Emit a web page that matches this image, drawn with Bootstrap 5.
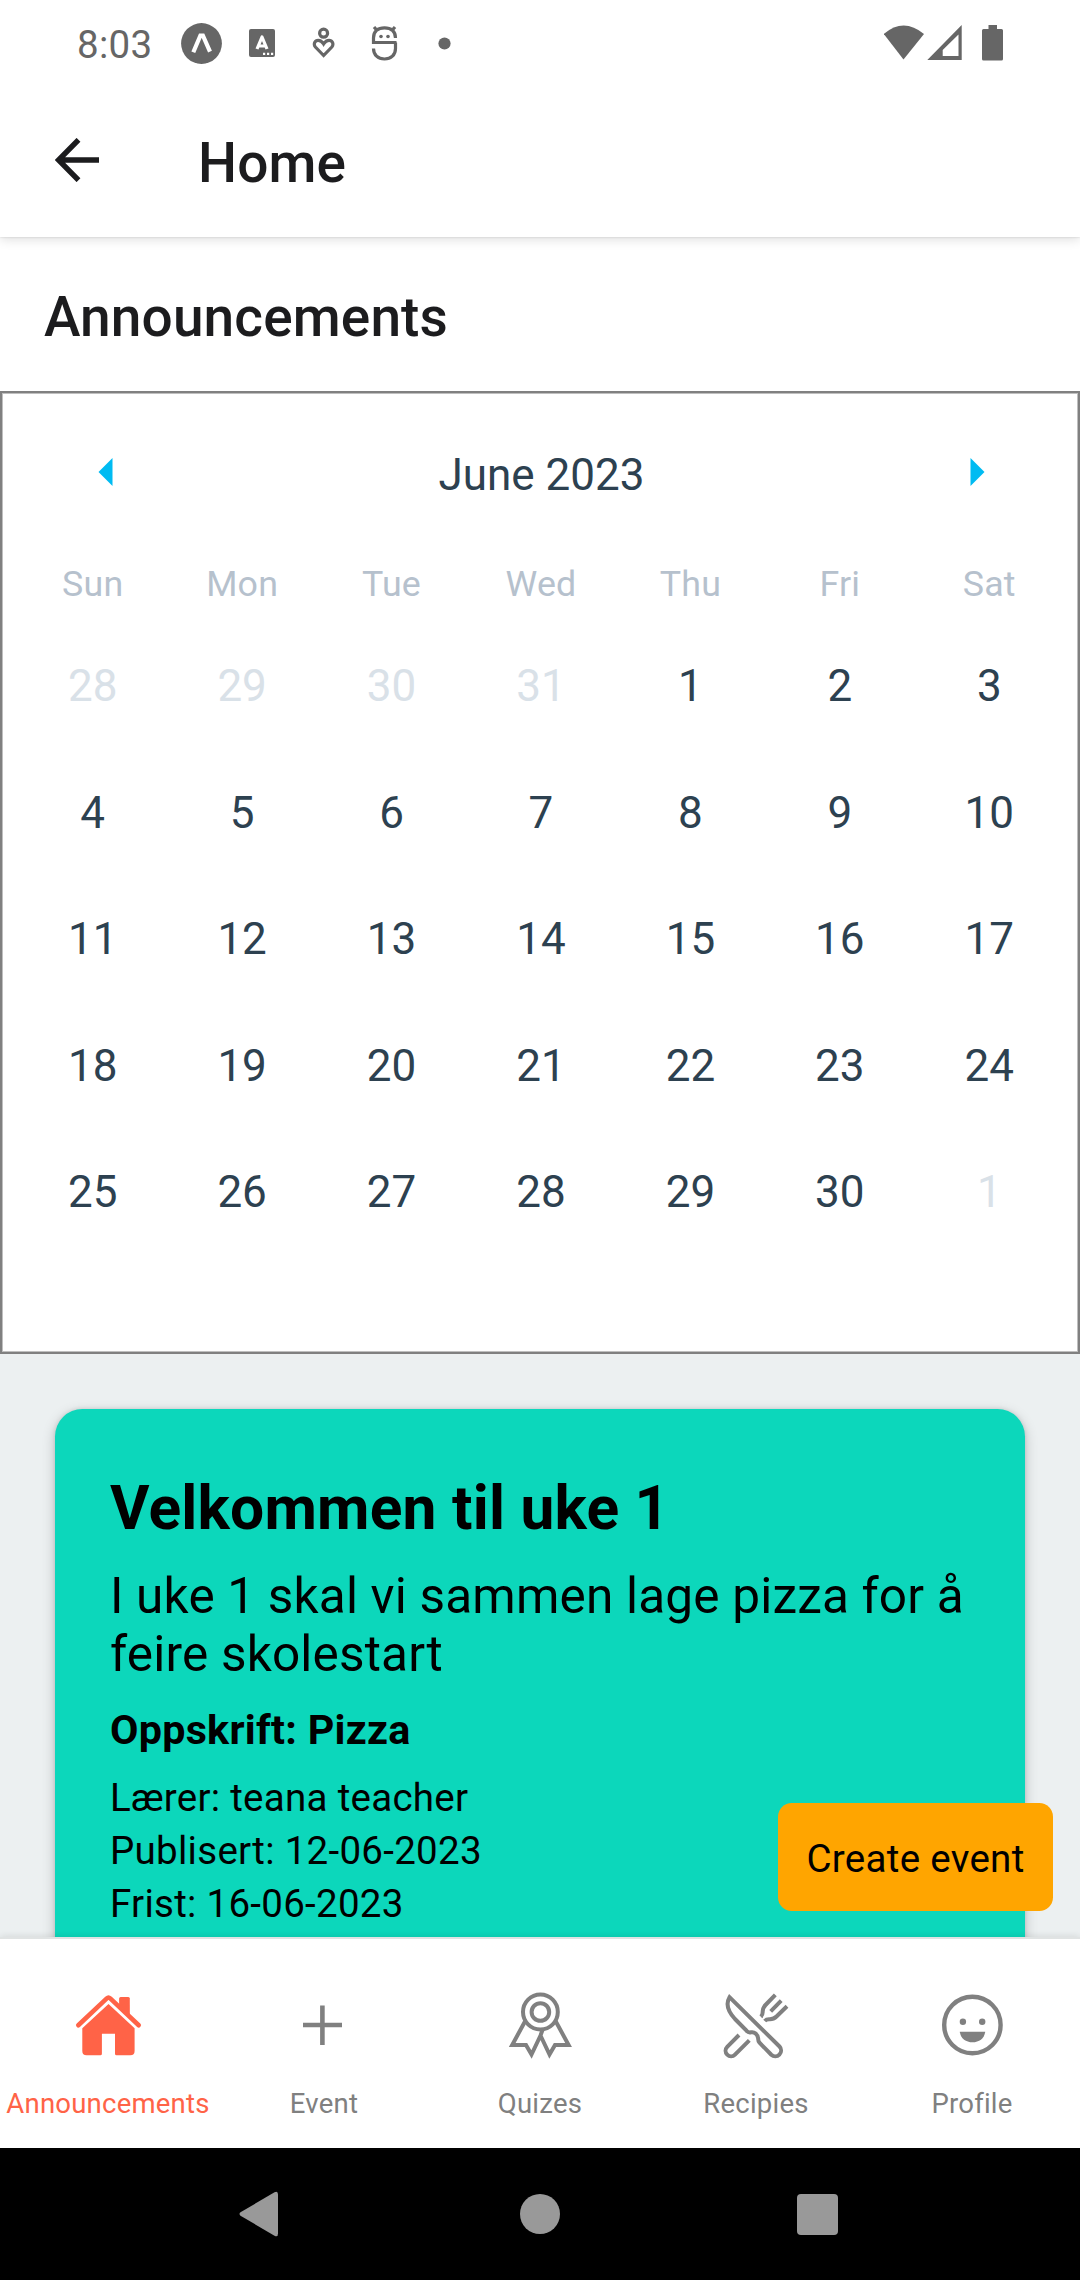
<!DOCTYPE html>
<html lang="no">
<head>
<meta charset="utf-8">
<meta name="viewport" content="width=device-width, initial-scale=1">
<title>Home</title>
<link href="https://cdn.jsdelivr.net/npm/bootstrap@5.3.0/dist/css/bootstrap.min.css" rel="stylesheet">
<style>
  body { width: 1080px; height: 2280px; overflow: hidden; font-family: Roboto, "Noto Sans", sans-serif; color: #000; background: #fff; }
  svg { display: block; flex: none; }
  .status-bar { height: 86px; padding: 0 76px; color: #666; background: #fff; font-size: 38.5px; line-height: 46px; letter-spacing: .3px; z-index: 3; }
  .status-time { width: 76px; padding: 3px 0 0 1px; }
  .app-bar { height: 151px; padding: 3px 0 0 55px; background: #fff; box-shadow: 0 2px 11px rgba(0,0,0,.14), 0 0 2px rgba(0,0,0,.16); z-index: 2; }
  .app-bar svg { margin: -7px 99px 0 0; }
  .screen-title { font-size: 55px; line-height: 64px; font-weight: 500; color: #1c1c1e; letter-spacing: .12px; }
  .section-head { height: 154px; padding: 6px 0 0 44px; }
  .calendar { height: 963px; border: 2px solid #808080; box-shadow: inset 0 0 0 1px #bfbfbf; padding: 0 14px 0 15px; color: #2d4150; font-size: 44px; line-height: 52px; }
  .month-row { height: 164px; padding: 0 79px 0 81px; }
  .month-row svg { margin-top: -6px; }
  .week-names { height: 54px; margin-bottom: 12px; font-size: 35.75px; letter-spacing: .2px; color: #b6c1cd; }
  .week-row { height: 126.5px; }
  .week-names, .week-row { padding-left: 1px; }
  .other-month { color: #d9e1e8; }
  .feed { height: 583px; background: #ecf0f1; padding: 55px 55px 0; }
  .event-card { height: 700px; border: 0; border-radius: 27.5px; background: #0cd7bb; color: #000; padding: 64px 50px 0 55px; box-shadow: 0 4px 14px rgba(0,0,0,.2), 0 0 4px rgba(0,0,0,.12); }
  .event-title { font-size: 60.5px; line-height: 71px; font-weight: 700; margin: 0 0 23px; letter-spacing: .22px; }
  .event-text { font-size: 49.5px; line-height: 58px; margin: 0 0 23px; letter-spacing: .19px; }
  .event-recipe { font-size: 41.25px; line-height: 48px; font-weight: 700; margin: 0 0 17px; letter-spacing: .27px; }
  .event-meta { font-size: 38.5px; line-height: 53px; letter-spacing: .28px; }
  .create-btn { right: 27px; bottom: 26px; width: 275px; height: 108px; padding: 4px 0 0; border: 0; border-radius: 13.75px; background: orange; color: #000; font-size: 38.5px; line-height: 46px; letter-spacing: .3px; }
  .tab-bar { height: 211px; background: #fff; border-top: 2px solid #e0e3e3; box-shadow: 0 -1px 7px rgba(0,0,0,.1); z-index: 2; }
  .tab-item { width: 216px; padding-top: 46px; color: #808080; font-size: 27.5px; line-height: 32px; letter-spacing: .22px; text-decoration: none; white-space: nowrap; }
  .tab-item svg { margin-bottom: 23px; }
  .tab-item.current { color: tomato; }
  .system-nav { height: 132px; background: #000; }
</style>
</head>
<body class="d-flex flex-column">

<header class="status-bar position-relative d-flex align-items-center flex-shrink-0">
  <span class="status-time">8:03</span>
  <svg style="margin-left:29px" width="41" height="41" viewBox="0 0 41 41"><circle cx="20.5" cy="20.5" r="20.4" fill="#666"/><path d="M12.300 29.300 19.400 12.500H21.900L29 28.700" fill="none" stroke="#fff" stroke-width="4.200"/></svg>
  <svg style="margin-left:27px" width="26" height="28" viewBox="0 0 26 28"><rect width="26" height="28" rx="2" fill="#666"/><path d="M8 20 13 8 18 20M9.5 17H16.500" fill="none" stroke="#fff" stroke-width="3.2" stroke-linejoin="round"/><path d="M14 24.800h2.200M18 24.800h2.200M22 24.800h2.200" stroke="#fff" stroke-width="2.200"/></svg>
  <svg style="margin-left:37px" width="23" height="32" viewBox="0 0 23 32"><g fill="none" stroke="#666" stroke-width="3.200"><circle cx="11.600" cy="6.200" r="4"/><path d="M11.600 28.500 3.400 20C1 17 3 13.300 6.200 13.300 8.500 13.300 10 14.500 11.600 17 13.200 14.500 14.700 13.300 17 13.300 20.200 13.300 22.200 17 19.800 20Z"/></g></svg>
  <svg style="margin-left:36px" width="27" height="36" viewBox="0 0 27 36"><g fill="none" stroke="#666" stroke-width="3.200"><path d="M25.500 17.500H2.500V13C2.500 6 7 2.800 13.500 2.800S24.500 6 24.500 13M2.500 23.500C2.500 30 7 34 13.500 34S24.500 30 24.500 23.500V17.500M3 2 6.500 6M24 2 20.500 6"/></g><circle cx="10" cy="11.500" r="1.800" fill="#666"/><circle cx="17" cy="11.500" r="1.800" fill="#666"/></svg>
  <svg style="margin-left:40px" width="13" height="13" viewBox="0 0 13 13"><circle cx="6.500" cy="6.500" r="6.100" fill="#666"/></svg>
  <svg class="ms-auto" width="120" height="36" viewBox="884 25 120 36" fill="#666"><path d="M883.800 34Q903.500 17 924 34L903.500 59.500Z"/><path fill-rule="evenodd" d="M927.300 60 961.700 25V60ZM942.700 56H958.500V34.500L942.700 50Z"/><path d="M988.500 25H997V29H1001.500Q1003 29 1003 30.500V59Q1003 60.600 1001.500 60.600H983.500Q982 60.600 982 59V30.500Q982 29 983.500 29H988.500Z"/></svg>
</header>

<nav class="app-bar d-flex align-items-center position-relative flex-shrink-0">
  <svg width="44" height="44" viewBox="0 0 44 44" fill="none" stroke="#1c1c1e" stroke-width="5.400"><path d="M44 22H4M23.500 1.800 3.500 22 23.500 42.200"/></svg>
  <h1 class="screen-title mb-0">Home</h1>
</nav>

<div class="section-head d-flex align-items-center flex-shrink-0">
  <h2 class="screen-title mb-0">Announcements</h2>
</div>

<section class="calendar flex-shrink-0">
  <div class="month-row d-flex align-items-center justify-content-between">
    <svg width="15" height="28" viewBox="0 0 15 28"><path d="M14.500 0V28L.5 14Z" fill="#00bbf2"/></svg>
    <span>June 2023</span>
    <svg width="15" height="28" viewBox="0 0 15 28"><path d="M.5 0V28L14.500 14Z" fill="#00bbf2"/></svg>
  </div>
  <div class="week-names row g-0 align-items-center text-center">
    <div class="col">Sun</div><div class="col">Mon</div><div class="col">Tue</div><div class="col">Wed</div><div class="col">Thu</div><div class="col">Fri</div><div class="col">Sat</div>
  </div>
  <div class="week-row row g-0 align-items-center text-center">
    <div class="col other-month">28</div><div class="col other-month">29</div><div class="col other-month">30</div><div class="col other-month">31</div><div class="col">1</div><div class="col">2</div><div class="col">3</div>
  </div>
  <div class="week-row row g-0 align-items-center text-center">
    <div class="col">4</div><div class="col">5</div><div class="col">6</div><div class="col">7</div><div class="col">8</div><div class="col">9</div><div class="col">10</div>
  </div>
  <div class="week-row row g-0 align-items-center text-center">
    <div class="col">11</div><div class="col">12</div><div class="col">13</div><div class="col">14</div><div class="col">15</div><div class="col">16</div><div class="col">17</div>
  </div>
  <div class="week-row row g-0 align-items-center text-center">
    <div class="col">18</div><div class="col">19</div><div class="col">20</div><div class="col">21</div><div class="col">22</div><div class="col">23</div><div class="col">24</div>
  </div>
  <div class="week-row row g-0 align-items-center text-center">
    <div class="col">25</div><div class="col">26</div><div class="col">27</div><div class="col">28</div><div class="col">29</div><div class="col">30</div><div class="col other-month">1</div>
  </div>
</section>

<main class="feed position-relative overflow-hidden flex-shrink-0">
  <article class="card event-card">
    <h3 class="event-title">Velkommen til uke 1</h3>
    <p class="event-text">I uke 1 skal vi sammen lage pizza for å feire skolestart</p>
    <p class="event-recipe">Oppskrift: Pizza</p>
    <div class="event-meta">Lærer: teana teacher</div>
    <div class="event-meta">Publisert: 12-06-2023</div>
    <div class="event-meta">Frist: 16-06-2023</div>
  </article>
  <button type="button" class="btn create-btn position-absolute">Create event</button>
</main>

<nav class="tab-bar d-flex position-relative flex-shrink-0">
  <a href="#" class="tab-item current d-flex flex-column align-items-center">
    <svg width="80" height="80" viewBox="0 0 80 80" fill="tomato"><path d="M51.100 20V13.500Q51.100 12 52.600 12H60.300Q61.800 12 61.800 13.500V31Z"/><path d="M10.300 40.200 38.800 13.400Q40.500 11.800 42.200 13.400L70.700 40.200" fill="none" stroke="tomato" stroke-width="4.600" stroke-linecap="round"/><path d="M40.500 19 66.600 43.300V66Q66.600 70.300 62.300 70.300H48.500Q47 70.300 47 68.800V48.700H33.900V68.800Q33.900 70.300 32.400 70.300H18.600Q14.300 70.300 14.300 66V43.300Z"/></svg>
    <span>Announcements</span>
  </a>
  <a href="#" class="tab-item d-flex flex-column align-items-center">
    <svg width="80" height="80" viewBox="0 0 80 80"><path d="M19 40H58M38.400 20.600V60" stroke="gray" stroke-width="4.600"/></svg>
    <span>Event</span>
  </a>
  <a href="#" class="tab-item d-flex flex-column align-items-center">
    <svg width="80" height="80" viewBox="0 0 80 80" fill="none" stroke="gray" stroke-width="4"><circle cx="40.400" cy="27" r="17.400"/><circle cx="40.400" cy="27" r="8.800"/><path d="M25.500 35.500 12.200 60H26L31.500 69.500 40.500 50.500 42.500 45M55.300 35.500 68.600 60H55L49.500 69.500 40.500 50.500"/></svg>
    <span>Quizes</span>
  </a>
  <a href="#" class="tab-item d-flex flex-column align-items-center">
    <svg width="80" height="80" viewBox="0 0 80 80" fill="none" stroke="gray" stroke-width="4"><path d="M13.500 12.200 63.500 61.500A5.800 5.800 0 0 1 55.300 69.700L43.500 57.700Q42 56 42.200 53.500C41.500 49.500 38.500 46.500 35 47.300Q32.500 48 30.500 45.700L19 34C12.500 27 9.500 19 13.500 12.200Z"/><path d="M23 50 11.200 61.800A5.500 5.500 0 0 0 19 69.600L33.300 55.300M59.300 9.800 49.500 20Q46.500 23 46.700 27 46.700 30 44.800 31.800M65.200 15.700 54.700 26.300M71 21.200 60.500 31.500Q57.500 34.400 53.500 34.200 50.500 34 48.700 36"/></svg>
    <span>Recipies</span>
  </a>
  <a href="#" class="tab-item d-flex flex-column align-items-center">
    <svg width="80" height="80" viewBox="0 0 80 80" fill="gray"><circle cx="40.400" cy="40" r="28.200" fill="none" stroke="gray" stroke-width="4.400"/><circle cx="30.900" cy="36.700" r="3.200"/><circle cx="50.200" cy="36.700" r="3.200"/><path d="M27.800 46.700H53.200C52.500 53.500 47 57.300 40.500 57.300S28.500 53.500 27.800 46.700Z"/></svg>
    <span>Profile</span>
  </a>
</nav>

<footer class="system-nav d-flex align-items-center flex-shrink-0">
  <svg width="1080" height="60" viewBox="0 0 1080 60" fill="#999"><path d="M240.500 28.300 274.500 8.300Q278 6.500 278 10.500V49.500Q278 53.500 274.500 51.700L240.500 31.700Q238.500 30 240.500 28.300Z"/><circle cx="540" cy="30" r="20"/><rect x="797" y="10" width="41" height="41" rx="4"/></svg>
</footer>

<script src="https://cdn.jsdelivr.net/npm/bootstrap@5.3.0/dist/js/bootstrap.bundle.min.js"></script>
</body>
</html>
